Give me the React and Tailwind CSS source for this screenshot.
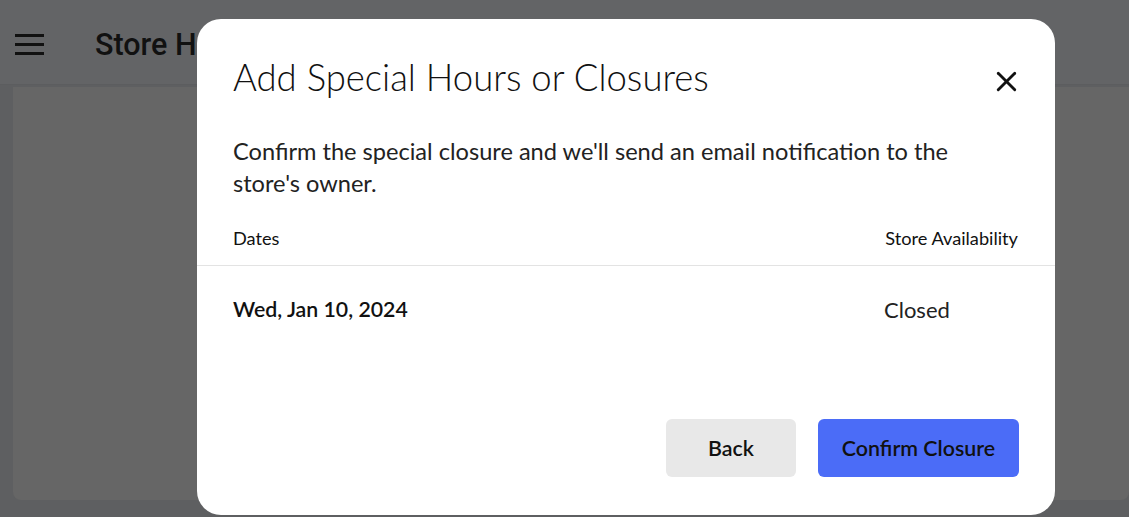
import React from 'react';
import { X } from 'lucide-react';

const SpecialClosureModal = () => {
  return (
    <div className="relative bg-white rounded-[24px] w-[858px] h-[496px] flex flex-col" style={{ fontFamily: 'Lato, "Open Sans", sans-serif' }}>
      <div className="flex items-start justify-between pl-9 pr-[32px] pt-[36px]">
        <h2 className="text-[36.5px] leading-[44px] font-light text-[#111]">Add Special Hours or Closures</h2>
        <button className="mt-[10px] text-[#111]">
          <X className="w-[33px] h-[33px]" strokeWidth={2.1} />
        </button>
      </div>

      <p className="pl-9 mt-[36px] w-[800px] text-[23.6px] leading-[32px] text-[#222]">
        Confirm the special closure and we'll send an email notification to the store's owner.
      </p>

      <div className="mt-[26px] flex justify-between pl-9 pr-[37px] pb-[13px] border-b border-[#e3e3e3] text-[18.2px] text-[#111]">
        <span>Dates</span>
        <span>Store Availability</span>
      </div>

      <div className="flex justify-between items-center pl-9 pr-[37px] pt-[27px] text-[21.3px] text-[#111]">
        <span className="font-semibold">Wed, Jan 10, 2024</span>
        <span className="w-[134px] text-[22px] text-[#222]">Closed</span>
      </div>

      <div className="mt-auto mb-[38px] flex justify-end gap-[22px] pr-9">
        <button className="w-[130px] h-[58px] rounded-[6px] bg-[#e8e8e8] text-[21.4px] font-semibold text-[#111]">Back</button>
        <button className="w-[201px] h-[58px] rounded-[6px] bg-[#4b6cf7] text-[21.4px] font-semibold text-[#111]">Confirm Closure</button>
      </div>
    </div>
  );
};

const App = () => {
  return (
    <div className="relative w-[1129px] h-[517px] overflow-hidden bg-[#5e5f61]">
      <header className="h-[85px] pt-[5px] bg-[#636466] border-b border-[#5c5d5f] flex items-center">
        <div className="ml-[15px] flex flex-col gap-[6px]">
          <span className="block w-[29px] h-[3px] bg-[#111]" />
          <span className="block w-[29px] h-[3px] bg-[#111]" />
          <span className="block w-[29px] h-[3px] bg-[#111]" />
        </div>
        <h1 className="ml-[51px] text-[30.5px] font-medium text-[#111]" style={{ fontFamily: 'Roboto, sans-serif' }}>Store Hours</h1>
      </header>
      <div className="ml-[13px] mt-[2px] h-[413px] bg-[#666666] rounded-b-[8px]" />

      <div className="absolute left-[197px] top-[19px]">
        <SpecialClosureModal />
      </div>
    </div>
  );
};

export default App;
